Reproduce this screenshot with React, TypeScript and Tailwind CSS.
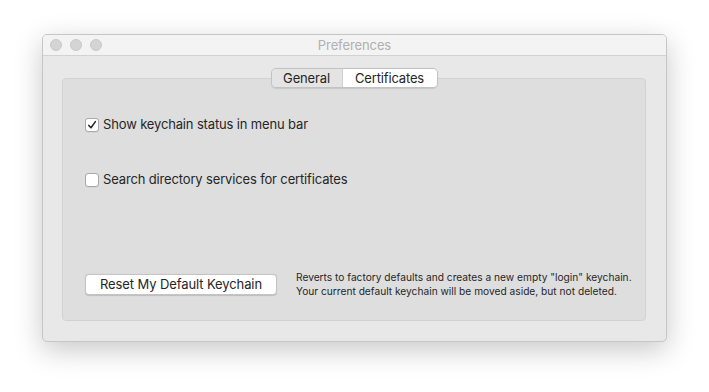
import React from "react";

function Check({ checked }: { checked: boolean }) {
  return (
    <span className="w-[14px] h-[14px] rounded-[3px] border border-[#a9a9a9] bg-white flex items-center justify-center shrink-0 shadow-[0_0.5px_0.5px_rgba(0,0,0,0.08)]">
      {checked && (
        <svg width="10" height="10" viewBox="0 0 10 10" fill="none">
          <path d="M1.8 5.4 L4 7.8 L8.4 1.6" stroke="#262626" strokeWidth="1.5" strokeLinecap="round" strokeLinejoin="round" />
        </svg>
      )}
    </span>
  );
}

export default function App() {
  return (
    <div className="w-[709px] h-[392px] bg-white pl-[42px] pt-[34px] font-['Inter','Liberation_Sans',sans-serif] text-[#262626]">
      <div className="w-[625px] h-[308px] rounded-[5px] border border-[#c6c6c6] bg-[#e8e8e8] overflow-hidden flex flex-col shadow-[0_8px_28px_rgba(0,0,0,0.22)]">
        <div className="h-[21px] bg-[#f3f3f3] border-b border-[#d2d2d2] relative flex items-center shrink-0">
          <div className="flex items-center gap-[8px] pl-[7px]">
            <span className="w-[12px] h-[12px] rounded-full bg-[#d4d4d4] border border-[#c8c8c8]" />
            <span className="w-[12px] h-[12px] rounded-full bg-[#d4d4d4] border border-[#c8c8c8]" />
            <span className="w-[12px] h-[12px] rounded-full bg-[#d4d4d4] border border-[#c8c8c8]" />
          </div>
          <div className="absolute inset-0 flex items-center justify-center text-[13px] text-[#b0b0b0] leading-none tracking-[-0.1px]">Preferences</div>
        </div>
        <div className="flex-1 flex flex-col pl-[19px] pr-[20px] pt-[12px] pb-[20px]">
          <div className="flex justify-center relative z-10">
            <div className="flex h-[20px] rounded-[5px] border border-[#c2c2c2] overflow-hidden text-[13px] leading-none tracking-[-0.15px] shadow-[0_0.5px_1px_rgba(0,0,0,0.1)]">
              <div className="w-[71px] bg-[#e4e4e4] flex items-center justify-center border-r border-[#d0d0d0]">General</div>
              <div className="w-[94px] bg-white flex items-center justify-center">Certificates</div>
            </div>
          </div>
          <div className="-mt-[10px] flex-1 rounded-[4px] border border-[#d2d2d2] bg-[#dedede] flex flex-col pl-[22px] pr-[22px] pt-[39px] pb-[22px]">
            <label className="flex items-center gap-[4px] text-[13px] h-[14px] tracking-[-0.15px]">
              <Check checked />
              <span>Show keychain status in menu bar</span>
            </label>
            <label className="flex items-center gap-[4px] text-[13px] h-[14px] mt-[41px] tracking-[-0.15px]">
              <Check checked={false} />
              <span>Search directory services for certificates</span>
            </label>
            <div className="flex-1" />
            <div className="flex items-center gap-[19px]">
              <button className="shrink-0 w-[192px] h-[21px] rounded-[4px] bg-white border border-[#c4c4c4] text-[13px] leading-none text-[#262626] tracking-[-0.1px] shadow-[0_0.5px_1px_rgba(0,0,0,0.15)]">
                Reset My Default Keychain
              </button>
              <div className="text-[10.2px] leading-[14px] text-[#262626] whitespace-nowrap">
                <div>Reverts to factory defaults and creates a new empty "login" keychain.</div>
                <div>Your current default keychain will be moved aside, but not deleted.</div>
              </div>
            </div>
          </div>
        </div>
      </div>
    </div>
  );
}
